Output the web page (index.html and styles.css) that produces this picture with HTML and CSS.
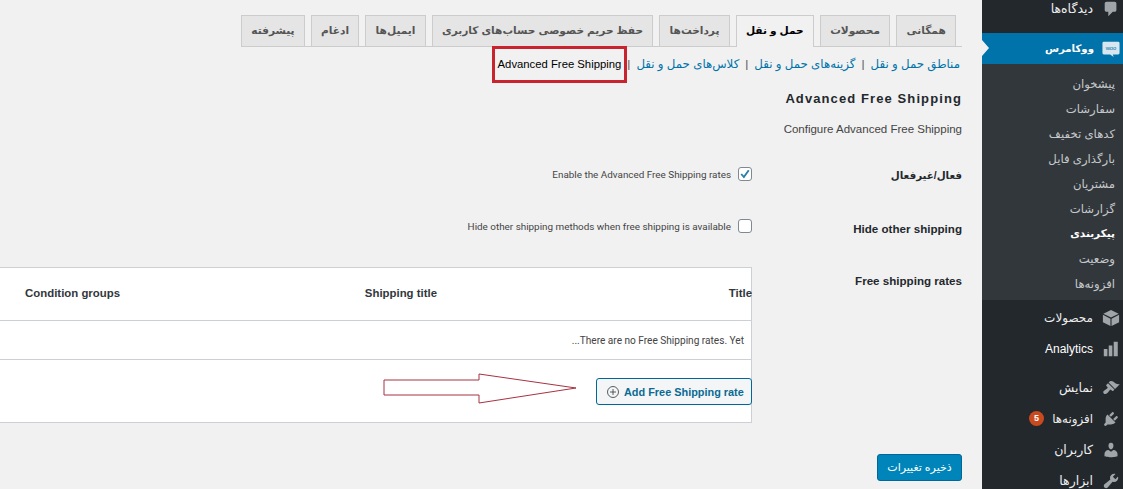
FILE: index.html
```html
<!DOCTYPE html>
<html lang="fa" dir="rtl">
<head>
<meta charset="utf-8">
<title>Advanced Free Shipping</title>
<link rel="stylesheet" href="styles.css">
</head>
<body>
<div class="shell">
  <aside class="sidebar">
    <a class="menu-item comments">
      <svg class="ico" viewBox="0 0 20 20"><path d="M5 2h9c1.100 0 2 .9 2 2v7c0 1.100-.9 2-2 2h-2l-5 5v-5H5c-1.100 0-2-.9-2-2V4c0-1.100.9-2 2-2z"/></svg>
      <span>دیدگاه‌ها</span>
    </a>
    <a class="menu-item current">
      <svg class="ico woo" viewBox="0 0 20 20"><path d="M2 2h16a1.500 1.500 0 0 1 1.500 1.500v11A1.500 1.500 0 0 1 18 16h-6l1 3-4-3H2a1.500 1.500 0 0 1-1.500-1.500v-11A1.500 1.500 0 0 1 2 2z"/><text x="10" y="11.500" text-anchor="middle" class="woo-text">woo</text></svg>
      <span>ووکامرس</span>
    </a>
    <nav class="submenu">
      <a>پیشخوان</a>
      <a>سفارشات</a>
      <a>کدهای تخفیف</a>
      <a>بارگذاری فایل</a>
      <a>مشتریان</a>
      <a>گزارشات</a>
      <a class="on">پیکربندی</a>
      <a>وضعیت</a>
      <a>افزونه‌ها</a>
    </nav>
    <a class="menu-item products">
      <svg class="ico" viewBox="0 0 20 20"><path d="M10 1l8.500 4.200L10 9.400 1.500 5.200z"/><path d="M1 6.500l8.400 4.200V19L1 14.800zM19 6.500v8.300L10.600 19v-8.300z"/></svg>
      <span>محصولات</span>
    </a>
    <a class="menu-item analytics">
      <svg class="ico" viewBox="0 0 20 20"><path d="M2 10h4v8H2zM7.500 6h4v12h-4zM13 2h4.500v16H13z"/></svg>
      <span class="latin">Analytics</span>
    </a>
    <a class="menu-item appearance">
      <svg class="ico" viewBox="0 0 20 20"><path d="M14.480 11.060L7.410 3.990l1.500-1.500c.5-.56 2.300-.47 3.510.32 1.210.8 1.430 1.280 2.910 2.100 1.180.64 2.450 1.260 4.450.85zm-.71.71L6.700 4.700 4.930 6.470c-.39.39-.39 1.020 0 1.410l1.060 1.060c.39.39.39 1.030 0 1.420-.6.6-1.430 1.110-2.210 1.690-.35.26-.7.53-1.010.84C1.430 13.230.76 14.910 1.980 16.120c1.220 1.220 2.890.54 4.220-.79.31-.31.58-.66.84-1.010.58-.78 1.090-1.610 1.690-2.210.39-.39 1.020-.39 1.410 0l1.060 1.060c.39.39 1.020.39 1.410 0z"/></svg>
      <span>نمایش</span>
    </a>
    <a class="menu-item plugins">
      <svg class="ico" viewBox="0 0 20 20"><path d="M13.110 4.360L9.870 7.600 8 5.730l3.240-3.240c.35-.34 1.050-.2 1.560.32.52.51.66 1.210.31 1.550zm-8 1.770l.91-1.120 9.010 9.010-1.190.84c-.71.71-2.630 1.160-3.820 1.160H6.140L4.900 17.260c-.59.59-1.540.59-2.120 0-.59-.58-.59-1.530 0-2.120l1.240-1.240v-3.880c0-1.130.4-3.190 1.090-3.890zm7.260 3.970l3.240-3.240c.34-.35 1.040-.21 1.550.31.52.51.66 1.210.31 1.550l-3.240 3.250z"/></svg>
      <span>افزونه‌ها</span>
      <b class="badge">5</b>
    </a>
    <a class="menu-item users">
      <svg class="ico" viewBox="0 0 20 20"><path d="M10 9.250c-2.270 0-2.730-3.440-2.730-3.440C7 4.020 7.820 2 9.970 2c2.160 0 2.980 2.020 2.710 3.810 0 0-.41 3.440-2.680 3.440zm0 2.570L12.720 10c2.390 0 4.520 2.330 4.520 4.530v2.490s-3.650 1.130-7.240 1.130c-3.650 0-7.240-1.130-7.240-1.130v-2.490c0-2.250 1.940-4.480 4.470-4.480z"/></svg>
      <span>کاربران</span>
    </a>
    <a class="menu-item tools">
      <svg class="ico" viewBox="0 0 20 20"><path d="M16.680 9.770c-1.340 1.340-3.300 1.670-4.950.99l-5.410 6.520c-.99.99-2.590.99-3.580 0s-.99-2.590 0-3.570l6.520-5.420c-.68-1.650-.35-3.610.99-4.950 1.280-1.280 3.120-1.620 4.720-1.060l-2.890 2.890 2.820 2.820 2.860-2.870c.53 1.580.18 3.390-1.080 4.650z"/></svg>
      <span>ابزارها</span>
    </a>
  </aside>

  <main class="content">
    <div class="tabs">
      <a class="tab">همگانی</a>
      <a class="tab">محصولات</a>
      <a class="tab active">حمل و نقل</a>
      <a class="tab">پرداخت‌ها</a>
      <a class="tab">حفظ حریم خصوصی حساب‌های کاربری</a>
      <a class="tab">ایمیل‌ها</a>
      <a class="tab">ادغام</a>
      <a class="tab">پیشرفته</a>
    </div>

    <div class="sublinks">
      <a>مناطق حمل و نقل</a><i>|</i>
      <a>گزینه‌های حمل و نقل</a><i>|</i>
      <a>کلاس‌های حمل و نقل</a><i>|</i>
      <strong class="current-link">Advanced Free Shipping</strong>
      <span class="red-box"></span>
    </div>

    <h2 class="title">Advanced Free Shipping</h2>
    <p class="desc">Configure Advanced Free Shipping</p>

    <div class="row row-enable">
      <div class="label label-fa">فعال/غیرفعال</div>
      <label class="field"><span class="check checked"><svg viewBox="0 0 16 16"><path d="M3 8l3.500 4L13 3" /></svg></span><span>Enable the Advanced Free Shipping rates</span></label>
    </div>
    <div class="row row-hide">
      <div class="label">Hide other shipping</div>
      <label class="field"><span class="check"></span><span>Hide other shipping methods when free shipping is available</span></label>
    </div>
    <div class="row row-rates">
      <div class="label">Free shipping rates</div>
      <div class="table-wrap">
        <div class="thead">
          <span class="col-title">Title</span>
          <span class="col-ship">Shipping title</span>
          <span class="col-cond">Condition groups</span>
        </div>
        <div class="tempty">There are no Free Shipping rates. Yet...</div>
        <div class="tfoot">
          <a class="add-btn"><svg viewBox="0 0 14 14"><circle cx="7" cy="7" r="5.500"/><path d="M7 4v6M4 7h6"/></svg><span>Add Free Shipping rate</span></a>
          <svg class="arrow" viewBox="0 0 194 31"><path d="M1 7H96V1L193 15 96 30V22H1z"/></svg>
        </div>
      </div>
    </div>

    <div class="actions"><button class="save">ذخیره تغییرات</button></div>
  </main>
</div>
</body>
</html>
```
FILE: styles.css
```css
* { box-sizing: border-box; }
html, body { margin: 0; height: 489px; overflow: hidden; }
body {
  background: #f1f1f1;
  color: #444;
  font-family: "Liberation Sans", "DejaVu Sans", sans-serif;
  font-size: 11px;
}
.shell { display: flex; flex-direction: row; height: 489px; overflow: hidden; }

/* sidebar */
.sidebar { width: 141px; flex: none; background: #23282d; color: #eee; overflow: hidden; }
.menu-item { display: flex; align-items: center; gap: 9px; height: 31px; padding-right: 3px; font-size: 12.500px; position: relative; }
.menu-item .ico { width: 18px; height: 18px; flex: none; fill: #a0a5aa; }
.comments { height: 33px; padding-bottom: 16px; }
.current { background: #0073aa; color: #fff; font-weight: 700; font-size: 10.200px; gap: 8px; }
.current::after { content: ""; position: absolute; left: 0; top: 7px; border-top: 8px solid transparent; border-bottom: 8px solid transparent; border-left: 7px solid #f1f1f1; }
.ico.woo { fill: #d7e6ef; }
.woo-text { font: 6.500px "Liberation Sans", sans-serif; fill: #0073aa; }
.submenu { background: #32373c; padding: 7px 0 3px; height: 236px; display: flex; flex-direction: column; }
.submenu a { height: 25px; line-height: 25px; padding-right: 8px; font-size: 11.700px; color: #c5c8ca; }
.submenu a.on { color: #fff; font-weight: 700; font-size: 10.500px; }
.products { margin-top: 2px; font-size: 12px; }
.analytics { height: 33px; margin-top: -1px; margin-bottom: 7px; }
.latin { font-family: "Liberation Sans", sans-serif; color: #fff; font-size: 12px; }
.plugins { font-size: 11.900px; }
.badge { width: 15px; height: 15px; border-radius: 50%; background: #ca4a1f; color: #fff; font-size: 9px; line-height: 15px; text-align: center; margin-right: -1px; }

/* main */
.content { flex: 1; min-width: 0; padding: 15px 20px 0 0; position: relative; overflow: hidden; }
.tabs { display: flex; gap: 6px; padding-right: 6px; height: 32px; border-bottom: 1px solid #ccc; width: 721px; }
.tab { height: 31px; line-height: 29px; padding: 0 9.250px; background: #e5e5e5; border: 1px solid #ccc; border-bottom: 0; color: #555; font-size: 10.600px; font-weight: 700; white-space: nowrap; }
.tab.active { background: #f1f1f1; color: #000; height: 32px; }

.sublinks { display: flex; align-items: center; gap: 6px; height: 24px; margin-top: 5px; padding-right: 2px; position: relative; font-size: 11.800px; color: #555; }
.sublinks a { color: #0073aa; }
.sublinks i { font-style: normal; }
.current-link { font-weight: 400; color: #000; font-size: 11.300px; }
.red-box { position: absolute; right: 335px; top: -6px; width: 135px; height: 37px; border: 3px solid #c8242f; }

.title { margin: 14px 0 0; font-size: 13px; line-height: 18px; font-weight: 700; color: #23282d; direction: ltr; text-align: right; letter-spacing: 1.100px; }
.desc { margin: 13px 0 0; font-size: 11.500px; line-height: 16px; color: #444; direction: ltr; text-align: right; }

.row { display: flex; align-items: flex-start; }
.label { width: 210px; flex: none; padding-top: 2px; font-size: 11.600px; font-weight: 700; color: #23282d; line-height: 16px; }
.label-fa { font-size: 10.300px; }
.field { display: flex; align-items: center; gap: 7px; height: 16px; font-family: Roboto, "Liberation Sans", sans-serif; font-size: 9.900px; color: #444; }
.check { width: 14px; height: 14px; border: 1px solid #7e8993; border-radius: 3px; background: #fff; flex: none; display: block; }
.check svg { display: block; width: 12px; height: 12px; fill: none; stroke: #2a7ea8; stroke-width: 2.500; }
.row-enable { margin-top: 29px; }
.row-hide { margin-top: 34px; }
.row-hide .label { padding-top: 3px; }
.row-rates { margin-top: 30px; }
.row-rates .label { padding-top: 6px; }

.table-wrap { flex: none; width: 752px; height: 156px; background: #fff; border: 1px solid #ccd0d4; border-left: 0; margin-left: -20px; }
.thead { height: 53px; margin-right: -1px; border-bottom: 1px solid #ccd0d4; display: flex; align-items: center; font-weight: 700; font-size: 11.400px; color: #32373c; line-height: 1; direction: ltr; justify-content: flex-end; flex-direction: row-reverse; }
.col-title { width: 315px; text-align: right; flex: none; }
.col-ship { width: 317px; text-align: right; flex: none; }
.col-cond { width: 120px; text-align: right; flex: none; }
.tempty { height: 39px; line-height: 39px; padding-right: 7px; font-family: Roboto, "Liberation Sans", sans-serif; font-size: 10.100px; color: #444; border-bottom: 1px solid #ccd0d4; }
.tfoot { height: 62px; display: flex; align-items: flex-start; padding-top: 18px; position: relative; }
.add-btn { display: flex; align-items: center; gap: 4px; height: 27px; width: 156px; margin-right: -1px; padding: 0 9px; border: 1px solid #006799; border-radius: 3px; background: #f3f5f6; color: #0a6a93; font-size: 10.900px; font-weight: 700; direction: ltr; }
.add-btn svg { width: 14px; height: 14px; fill: none; stroke: #32373c; stroke-width: .8; flex: none; }
.add-btn span { white-space: nowrap; }
.arrow { position: absolute; right: 174px; top: 13px; width: 194px; height: 31px; fill: #fff; stroke: #a83240; stroke-width: 1; }

.actions { margin-top: 31px; }
.save { display: block; height: 27px; width: 85px; padding: 0; border: 1px solid #006799; border-radius: 3px; background: #0085ba; color: #fff; font: 11px "Liberation Sans", "DejaVu Sans", sans-serif; }
```
